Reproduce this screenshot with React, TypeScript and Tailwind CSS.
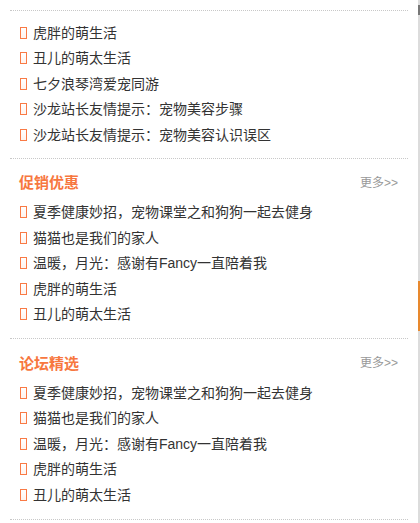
import React from 'react';

interface Section {
  title?: string;
  items: string[];
}

const sections: Section[] = [
  {
    items: ['虎胖的萌生活', '丑儿的萌太生活', '七夕浪琴湾爱宠同游', '沙龙站长友情提示：宠物美容步骤', '沙龙站长友情提示：宠物美容认识误区'],
  },
  {
    title: '促销优惠',
    items: ['夏季健康妙招，宠物课堂之和狗狗一起去健身', '猫猫也是我们的家人', '温暖，月光：感谢有Fancy一直陪着我', '虎胖的萌生活', '丑儿的萌太生活'],
  },
  {
    title: '论坛精选',
    items: ['夏季健康妙招，宠物课堂之和狗狗一起去健身', '猫猫也是我们的家人', '温暖，月光：感谢有Fancy一直陪着我', '虎胖的萌生活', '丑儿的萌太生活'],
  },
];

const Divider: React.FC = () => (
  <div className="mx-[10px] h-px border-t border-dotted border-[#c8c8c8]" />
);

const Bullet: React.FC = () => (
  <span className="inline-block w-[7px] h-[12px] border border-[#f97a45] bg-gradient-to-b from-white to-[#fff3ee] shrink-0" />
);

const App: React.FC = () => {
  return (
    <div
      className="w-[420px] h-[523px] bg-white flex overflow-hidden"
      style={{ fontFamily: '"Liberation Sans", "Noto Sans CJK SC", sans-serif' }}
    >
      <div className="flex-1 pt-[10px]">
        {sections.map((section, i) => (
          <div key={i}>
            <Divider />
            {section.title ? (
              <div className="flex items-center justify-between pl-[19px] pr-[20px] mt-[14px] h-[20px]">
                <span className="text-[15px] font-bold text-[#f7773f] leading-none">{section.title}</span>
                <span className="text-[12px] text-[#999] leading-none">更多&gt;&gt;</span>
              </div>
            ) : (
              <div className="h-[9px]" />
            )}
            <ul className={section.title ? 'pt-[7px] pb-[11px]' : 'pb-[10px]'}>
              {section.items.map((item, j) => (
                <li key={j} className="flex items-center gap-[6px] pl-[20px] h-[25.5px] text-[14px] text-[#333]">
                  <Bullet />
                  <span className="leading-none">{item}</span>
                </li>
              ))}
            </ul>
          </div>
        ))}
        <Divider />
      </div>
      <div className="w-[2px] flex flex-col bg-[#dcdcdc]">
        <div className="h-[5px]" />
        <div className="h-[10px] bg-[#777]" />
        <div className="h-[266px]" />
        <div className="h-[50px] bg-[#e8892e]" />
      </div>
    </div>
  );
};

export default App;
